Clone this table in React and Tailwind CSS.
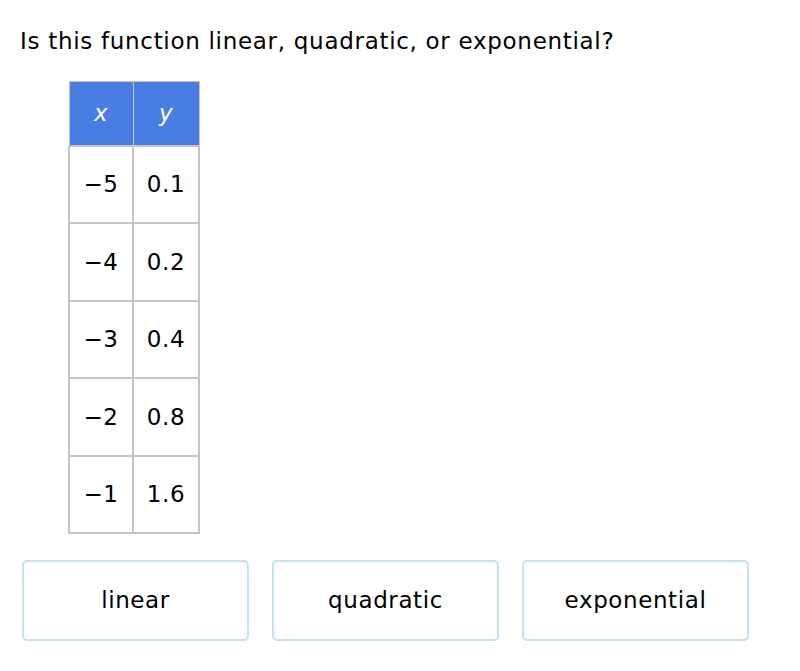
export default function App() {
  const rows = [
    ["\u22125", "0.1"],
    ["\u22124", "0.2"],
    ["\u22123", "0.4"],
    ["\u22122", "0.8"],
    ["\u22121", "1.6"],
  ];
  const font = { fontFamily: '"DejaVu Sans", Verdana, sans-serif' };
  return (
    <div className="w-[800px] h-[671px] bg-white text-black" style={font}>
      <div className="pt-[26px] pl-[20px] text-[23px] tracking-[0.7px] leading-[30px]">
        Is this function linear, quadratic, or exponential?
      </div>
      <div className="pl-[68px] pt-[25px]">
        <table className="border-collapse text-[23px] tracking-[0.6px]">
          <thead>
            <tr>
              <th className="w-[64px] h-[64px] bg-[#4a7de3] text-white font-normal italic border border-[#c5c5c5] p-0">
                x
              </th>
              <th className="w-[66px] h-[64px] bg-[#4a7de3] text-white font-normal italic border border-[#c5c5c5] p-0">
                y
              </th>
            </tr>
          </thead>
          <tbody>
            {rows.map(([x, y]) => (
              <tr key={x}>
                <td className="h-[77.5px] text-center border-2 border-[#c5c5c5] p-0">{x}</td>
                <td className="h-[77.5px] text-center border-2 border-[#c5c5c5] p-0">{y}</td>
              </tr>
            ))}
          </tbody>
        </table>
      </div>
      <div className="flex gap-[23px] pl-[22px] pt-[26px]">
        {["linear", "quadratic", "exponential"].map((t) => (
          <div
            key={t}
            className="w-[227px] h-[81px] border-2 border-[#bfe3f2] rounded-[5px] flex items-center justify-center text-[23px] tracking-[0.6px]"
          >
            {t}
          </div>
        ))}
      </div>
    </div>
  );
}
